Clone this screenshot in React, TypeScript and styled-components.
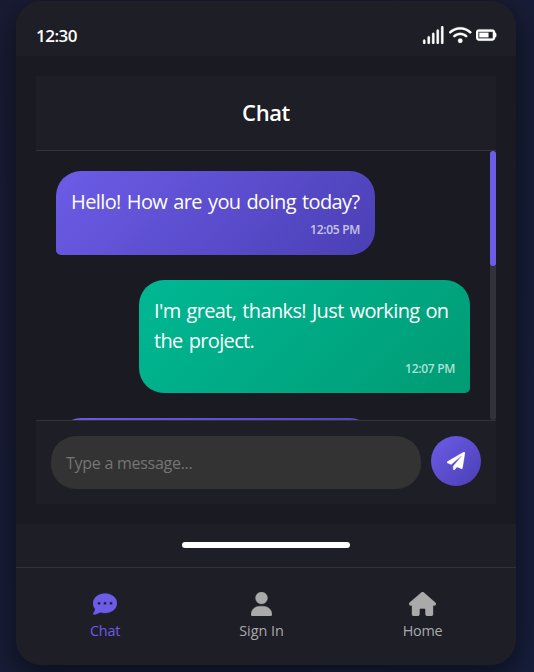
import React from 'react';
import styled, { createGlobalStyle, css } from 'styled-components';
import {
  FaSignal, FaWifi, FaBatteryThreeQuarters, FaCommentDots, FaUser, FaHouse,
} from 'react-icons/fa6';
import { FaPaperPlane } from 'react-icons/fa';

const GlobalStyle = createGlobalStyle`
  * { box-sizing: border-box; }
  html, body { margin: 0; height: 100%; overflow: hidden; }
  body {
    font-family: 'Open Sans', 'Noto Sans', sans-serif;
    color: #fff;
    background: #16213e;
  }
`;

const Page = styled.div`
  height: 672px;
  padding: 1px 18px 0 16px;
  overflow: hidden;
  background: linear-gradient(135deg, #191b33, #161e3a);
`;

const Phone = styled.main`
  display: flex;
  flex-direction: column;
  width: 500px;
  height: 664px;
  border-radius: 25px;
  overflow: hidden;
  background: #1a1a22;
  box-shadow: 0 10px 30px rgba(0, 0, 0, 0.5);
`;

const StatusBar = styled.header`
  display: flex;
  flex: 0 0 55px;
  align-items: center;
  justify-content: space-between;
  padding: 15px 19.5px 0 20px;
  background: #1e1e26;
`;

const Clock = styled.span`
  font-size: 17px;
  line-height: 24px;
  font-weight: 600;
  letter-spacing: -0.5px;
`;

const StatusIcons = styled.div`
  display: flex;
  align-items: center;
  gap: 4.5px;
  padding-bottom: 2px;
`;

const Glyph = styled.span<{ $width: number; $height: number }>`
  display: flex;
  svg {
    width: ${({ $width }) => $width}px;
    height: ${({ $height }) => $height}px;
    stroke: currentColor;
    stroke-width: 8px;
  }
`;

const Screen = styled.section`
  flex: 0 0 468px;
  padding: 20px;
`;

const ChatPanel = styled.div`
  display: flex;
  flex-direction: column;
  height: 428px;
  background: #1e1e26;
`;

const Title = styled.h1`
  flex: 0 0 75px;
  margin: 0;
  border-bottom: 1px solid #333;
  text-align: center;
  font-size: 22px;
  font-weight: 600;
  line-height: 72px;
  letter-spacing: -0.4px;
`;

const MessageArea = styled.div`
  display: flex;
  flex: 0 0 269px;
  overflow: hidden;
  background: #1a1a22;
`;

const Messages = styled.div`
  display: flex;
  flex: 1;
  flex-direction: column;
  gap: 25px;
  padding: 20px 20px 0;
`;

const ScrollTrack = styled.div`
  flex: 0 0 6px;
  border-radius: 3px;
  background: #32323b;
`;

const ScrollThumb = styled.div`
  height: 115px;
  border-radius: 3px;
  background: #6c5ce7;
`;

const Bubble = styled.article<{ $sent?: boolean }>`
  flex: none;
  min-height: 83.6px;
  padding: 16px 15px 15px;
  font-size: 20px;
  line-height: 30px;
  ${({ $sent }) => $sent
    ? css`
        align-self: flex-end;
        width: 331px;
        border-radius: 25px 25px 5px 25px;
        background: linear-gradient(135deg, #00b894, #009b74);
      `
    : css`
        align-self: flex-start;
        width: 319px;
        border-radius: 25px 25px 25px 5px;
        background: linear-gradient(135deg, #6c5ce7, #4b3fb5);
      `}
`;

const Line = styled.div<{ $spacing: number }>`
  white-space: nowrap;
  word-spacing: 1.4px;
  letter-spacing: ${({ $spacing }) => $spacing}px;
`;

const Time = styled.time`
  display: block;
  margin-top: 4px;
  font-size: 12px;
  font-weight: 600;
  line-height: 18.6px;
  text-align: right;
  letter-spacing: -0.3px;
  color: rgba(255, 255, 255, 0.7);
`;

const Composer = styled.form`
  display: flex;
  flex: 0 0 84px;
  align-items: flex-start;
  gap: 10px;
  padding: 15px;
  border-top: 1px solid #333;
`;

const MessageInput = styled.input`
  width: 370px;
  height: 53px;
  padding: 0 15px;
  border: 0;
  border-radius: 25px;
  background: #333;
  color: #fff;
  font: 16px 'Open Sans', sans-serif;
  letter-spacing: -0.27px;
  &::placeholder { color: #757575; }
`;

const SendButton = styled.button`
  display: grid;
  place-items: center;
  width: 50px;
  height: 50px;
  padding: 0;
  border: 0;
  border-radius: 50%;
  color: #fff;
  background: linear-gradient(135deg, #6c5ce7, #4b3fb5);
`;

const HomeStrip = styled.div`
  display: flex;
  flex: 0 0 43px;
  justify-content: center;
  padding-top: 18px;
  background: #1e1e26;
`;

const HomeIndicator = styled.div`
  width: 168px;
  height: 6px;
  border-radius: 3px;
  background: #fff;
`;

const TabBar = styled.nav`
  display: flex;
  flex: 1;
  justify-content: space-around;
  padding: 23.5px 14.5px 0;
  border-top: 1px solid #333;
  background: #1e1e26;
`;

const Tab = styled.a<{ $active?: boolean; $width: number; $spacing: number }>`
  display: flex;
  flex-direction: column;
  align-items: center;
  gap: 4.5px;
  width: ${({ $width }) => $width}px;
  font-size: 14.4px;
  line-height: 22px;
  letter-spacing: ${({ $spacing }) => $spacing}px;
  white-space: nowrap;
  color: ${({ $active }) => ($active ? '#6c5ce7' : '#aaa')};
`;

export default function App() {
  return (
    <>
      <GlobalStyle />
      <Page>
        <Phone>
          <StatusBar>
            <Clock>12:30</Clock>
            <StatusIcons>
              <Glyph $width={22.5} $height={18}><FaSignal /></Glyph>
              <Glyph $width={22.5} $height={18}><FaWifi /></Glyph>
              <Glyph $width={20.25} $height={18}><FaBatteryThreeQuarters /></Glyph>
            </StatusIcons>
          </StatusBar>
          <Screen>
            <ChatPanel>
              <Title>Chat</Title>
              <MessageArea>
                <Messages>
                  <Bubble>
                    <Line $spacing={-0.6}>Hello! How are you doing today?</Line>
                    <Time>12:05 PM</Time>
                  </Bubble>
                  <Bubble $sent>
                    <Line $spacing={-0.64}>I'm great, thanks! Just working on</Line>
                    <Line $spacing={-0.64}>the project.</Line>
                    <Time>12:07 PM</Time>
                  </Bubble>
                  <Bubble />
                </Messages>
                <ScrollTrack><ScrollThumb /></ScrollTrack>
              </MessageArea>
              <Composer>
                <MessageInput placeholder="Type a message..." />
                <SendButton type="button" aria-label="Send">
                  <Glyph $width={18} $height={18}><FaPaperPlane /></Glyph>
                </SendButton>
              </Composer>
            </ChatPanel>
          </Screen>
          <HomeStrip><HomeIndicator /></HomeStrip>
          <TabBar>
            <Tab $active $width={31} $spacing={-0.2}>
              <Glyph $width={24} $height={24}><FaCommentDots /></Glyph>
              Chat
            </Tab>
            <Tab $width={46} $spacing={0}>
              <Glyph $width={21} $height={24}><FaUser /></Glyph>
              Sign In
            </Tab>
            <Tab $width={40} $spacing={-0.35}>
              <Glyph $width={27} $height={24}><FaHouse /></Glyph>
              Home
            </Tab>
          </TabBar>
        </Phone>
      </Page>
    </>
  );
}
